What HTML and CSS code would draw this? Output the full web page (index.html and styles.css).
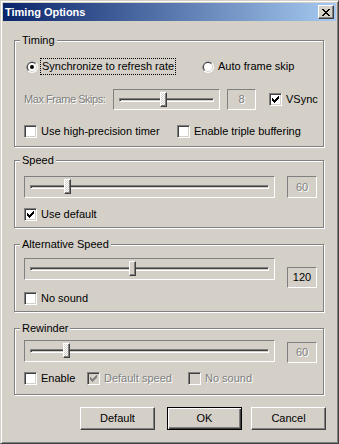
FILE: index.html
```html
<!DOCTYPE html>
<html>
<head>
<meta charset="utf-8">
<link rel="stylesheet" href="styles.css">
</head>
<body>
<div class="window">
  <div class="titlebar">
    <span class="title">Timing Options</span>
    <span class="close"><svg width="8" height="7" viewBox="0 0 8 7"><path d="M0 0h2v1h-2z M6 0h2v1h-2z M1 1h2v1h-2z M5 1h2v1h-2z M2 2h4v1h-4z M3 3h2v1h-2z M2 4h4v1h-4z M1 5h2v1h-2z M5 5h2v1h-2z M0 6h2v1h-2z M6 6h2v1h-2z" fill="#000"/></svg></span>
  </div>
  <div class="client">
    <div class="group g-timing">
      <span class="legend">Timing</span>
      <div class="row r1">
        <div class="opt w176">
          <svg class="rb" width="12" height="12" viewBox="0 0 12 12"><circle cx="6" cy="6" r="6" fill="#fff"/><path d="M1.76 10.24A6 6 0 0 1 10.24 1.76Z" fill="#808080"/><circle cx="6" cy="6" r="5" fill="#D4D0C8"/><path d="M2.46 9.54A5 5 0 0 1 9.54 2.46Z" fill="#404040"/><circle cx="6" cy="6" r="4" fill="#fff"/><circle cx="6" cy="6" r="2" fill="#000"/></svg>
          <span class="lbl focus">Synchronize to refresh rate</span>
        </div>
        <div class="opt">
          <svg class="rb" width="12" height="12" viewBox="0 0 12 12"><circle cx="6" cy="6" r="6" fill="#fff"/><path d="M1.76 10.24A6 6 0 0 1 10.24 1.76Z" fill="#808080"/><circle cx="6" cy="6" r="5" fill="#D4D0C8"/><path d="M2.46 9.54A5 5 0 0 1 9.54 2.46Z" fill="#404040"/><circle cx="6" cy="6" r="4" fill="#fff"/></svg>
          <span class="lbl">Auto frame skip</span>
        </div>
      </div>
      <div class="row r2">
        <span class="skip-lbl disabled">Max Frame Skips:</span>
        <div class="slider s-small">
          <div class="channel"></div>
          <div class="thumb dither" style="left:46px"></div>
        </div>
        <div class="edit e-small disabled">8</div>
        <div class="opt vsync">
          <span class="cb"><svg width="7" height="7" viewBox="0 0 7 7"><path d="M6 0h1v1h-1z M5 1h2v1h-2z M0 2h1v1h-1z M4 2h3v1h-3z M0 3h2v1h-2z M3 3h3v1h-3z M0 4h5v1h-5z M1 5h3v1h-3z M2 6h1v1h-1z" fill="#000"/></svg></span>
          <span class="lbl">VSync</span>
        </div>
      </div>
      <div class="row r3">
        <div class="opt w153">
          <span class="cb"></span>
          <span class="lbl">Use high-precision timer</span>
        </div>
        <div class="opt">
          <span class="cb"></span>
          <span class="lbl">Enable triple buffering</span>
        </div>
      </div>
    </div>

    <div class="group g-speed">
      <span class="legend">Speed</span>
      <div class="row srow">
        <div class="slider s-wide">
          <div class="channel"></div>
          <div class="thumb dither" style="left:39px"></div>
        </div>
        <div class="edit e-wide disabled">60</div>
      </div>
      <div class="row crow">
        <div class="opt">
          <span class="cb"><svg width="7" height="7" viewBox="0 0 7 7"><path d="M6 0h1v1h-1z M5 1h2v1h-2z M0 2h1v1h-1z M4 2h3v1h-3z M0 3h2v1h-2z M3 3h3v1h-3z M0 4h5v1h-5z M1 5h3v1h-3z M2 6h1v1h-1z" fill="#000"/></svg></span>
          <span class="lbl">Use default</span>
        </div>
      </div>
    </div>

    <div class="group g-alt">
      <span class="legend">Alternative Speed</span>
      <div class="row srow">
        <div class="slider s-wide">
          <div class="channel"></div>
          <div class="thumb" style="left:104px"></div>
        </div>
        <div class="edit e-wide e-low">120</div>
      </div>
      <div class="row crow">
        <div class="opt">
          <span class="cb"></span>
          <span class="lbl">No sound</span>
        </div>
      </div>
    </div>

    <div class="group g-rew">
      <span class="legend">Rewinder</span>
      <div class="row srow">
        <div class="slider s-wide">
          <div class="channel"></div>
          <div class="thumb dither" style="left:38px"></div>
        </div>
        <div class="edit e-wide e-mid disabled">60</div>
      </div>
      <div class="row crow">
        <div class="opt w63">
          <span class="cb"></span>
          <span class="lbl">Enable</span>
        </div>
        <div class="opt w101">
          <span class="cb dis"><svg width="7" height="7" viewBox="0 0 7 7"><path d="M6 0h1v1h-1z M5 1h2v1h-2z M0 2h1v1h-1z M4 2h3v1h-3z M0 3h2v1h-2z M3 3h3v1h-3z M0 4h5v1h-5z M1 5h3v1h-3z M2 6h1v1h-1z" fill="#808080"/></svg></span>
          <span class="lbl disabled">Default speed</span>
        </div>
        <div class="opt">
          <span class="cb dis"></span>
          <span class="lbl disabled">No sound</span>
        </div>
      </div>
    </div>

    <div class="buttons">
      <div class="btn">Default</div>
      <div class="btn btn-default">OK</div>
      <div class="btn">Cancel</div>
    </div>
  </div>
</div>
</body>
</html>
```

FILE: styles.css
```css
html, body {
  margin: 0;
  padding: 0;
  background: #D4D0C8;
}
body {
  font-family: "Liberation Sans", Arial, sans-serif;
  font-size: 11px;
  line-height: 13px;
  color: #000;
}
.window {
  width: 339px;
  height: 444px;
  box-sizing: border-box;
  background: #D4D0C8;
  border: 1px solid;
  border-color: #D4D0C8 #404040 #404040 #D4D0C8;
  box-shadow: inset 1px 1px 0 #fff, inset -1px -1px 0 #808080;
  padding: 2px;
}
.titlebar {
  height: 18px;
  display: flex;
  align-items: center;
  justify-content: space-between;
  padding: 0 2px 0 2px;
  background: linear-gradient(to right, #0A246A, #A6CAF0);
}
.title {
  color: #fff;
  font-weight: bold;
}
.close {
  width: 16px;
  height: 14px;
  box-sizing: border-box;
  background: #D4D0C8;
  border: 1px solid;
  border-color: #fff #404040 #404040 #fff;
  box-shadow: inset -1px -1px 0 #808080;
  display: flex;
  align-items: center;
  justify-content: center;
}
.close svg { display: block; }
.client {
  padding: 19px 12px 0 11px;
}
.group {
  position: relative;
  border: 1px solid #808080;
  box-shadow: inset 1px 1px 0 #fff, 1px 1px 0 #fff;
  padding-left: 9px;
}
.legend {
  position: absolute;
  top: -7px;
  left: 5px;
  padding: 0 2px;
  background: #D4D0C8;
  line-height: 13px;
}
.g-timing { padding-top: 17px; padding-bottom: 8px; }
.g-speed { margin-top: 13px; padding-top: 15px; padding-bottom: 6px; }
.g-alt { margin-top: 16px; padding-top: 13px; padding-bottom: 6px; }
.g-rew { margin-top: 16px; padding-top: 11px; padding-bottom: 9px; }

.row { display: flex; align-items: center; }
.opt { display: flex; align-items: center; flex: none; }
.w176 { width: 176px; }
.w153 { width: 153px; }
.w63 { width: 63px; }
.w101 { width: 101px; }

.r1 { height: 17px; margin-left: 2px; }
.r2 { height: 21px; margin-top: 14px; }
.r3 { height: 13px; margin-top: 15px; }
.srow { align-items: flex-start; }
.crow { height: 13px; }
.g-speed .crow { margin-top: 10px; }
.g-alt .crow { margin-top: 4px; }
.g-rew .crow { margin-top: 9px; }

.rb { display: block; flex: none; }
.rb + .lbl {
  margin-left: 2px;
  border: 1px solid transparent;
  padding: 1px 1px;
}
.focus { border: 1px dotted #000 !important; }
.cb + .lbl { margin-left: 4px; }

.cb {
  width: 13px;
  height: 13px;
  box-sizing: border-box;
  flex: none;
  border: 1px solid;
  border-color: #808080 #fff #fff #808080;
  box-shadow: inset 1px 1px 0 #404040, inset -1px -1px 0 #D4D0C8;
  background: #fff;
  display: flex;
  align-items: center;
  justify-content: center;
}
.cb svg { display: block; }
.cb.dis { background: #D4D0C8; }

.disabled {
  color: #808080;
  text-shadow: 1px 1px 0 #fff;
}
.skip-lbl {
  width: 89px;
  flex: none;
  white-space: nowrap;
  letter-spacing: -0.45px;
}

.slider {
  position: relative;
  flex: none;
  box-sizing: border-box;
  border: 1px solid;
  border-color: #808080 #fff #fff #808080;
  display: flex;
  align-items: center;
  padding: 0 5px;
}
.s-small { width: 107px; height: 21px; }
.s-wide { width: 251px; height: 22px; }
.channel {
  flex: 1;
  height: 4px;
  box-sizing: border-box;
  border: 1px solid;
  border-color: #808080 #fff #fff #808080;
  box-shadow: inset 1px 1px 0 #404040, inset -1px -1px 0 #D4D0C8;
}
.thumb {
  position: absolute;
  top: 2px;
  width: 7px;
  height: 15px;
  box-sizing: border-box;
  background: #D4D0C8;
  border: 1px solid;
  border-color: #fff #404040 #404040 #fff;
  box-shadow: inset -1px -1px 0 #808080;
}
.thumb.dither {
  background: repeating-conic-gradient(#fff 0 25%, #D4D0C8 0 50%) 0 0 / 2px 2px;
}

.edit {
  flex: none;
  box-sizing: border-box;
  border: 1px solid;
  border-color: #808080 #fff #fff #808080;
  display: flex;
  align-items: center;
  justify-content: center;
}
.e-small { width: 29px; height: 21px; margin-left: 7px; }
.e-wide { width: 30px; height: 22px; margin-left: 12px; }
.e-low { height: 21px; margin-top: 9px; }
.e-mid { height: 21px; margin-top: 2px; }
.vsync { margin-left: 13px; }

.buttons {
  display: flex;
  justify-content: flex-end;
  margin: 12px -2px 0 0;
}
.btn {
  width: 75px;
  height: 23px;
  box-sizing: border-box;
  border: 1px solid;
  border-color: #fff #404040 #404040 #fff;
  box-shadow: inset -1px -1px 0 #808080;
  display: flex;
  align-items: center;
  justify-content: center;
}
.btn-default {
  margin-left: 12px;
  border-color: #000;
  box-shadow: inset 1px 1px 0 #fff, inset -1px -1px 0 #404040, inset -2px -2px 0 #808080;
}
.btn-default + .btn { margin-left: 9px; }
```
